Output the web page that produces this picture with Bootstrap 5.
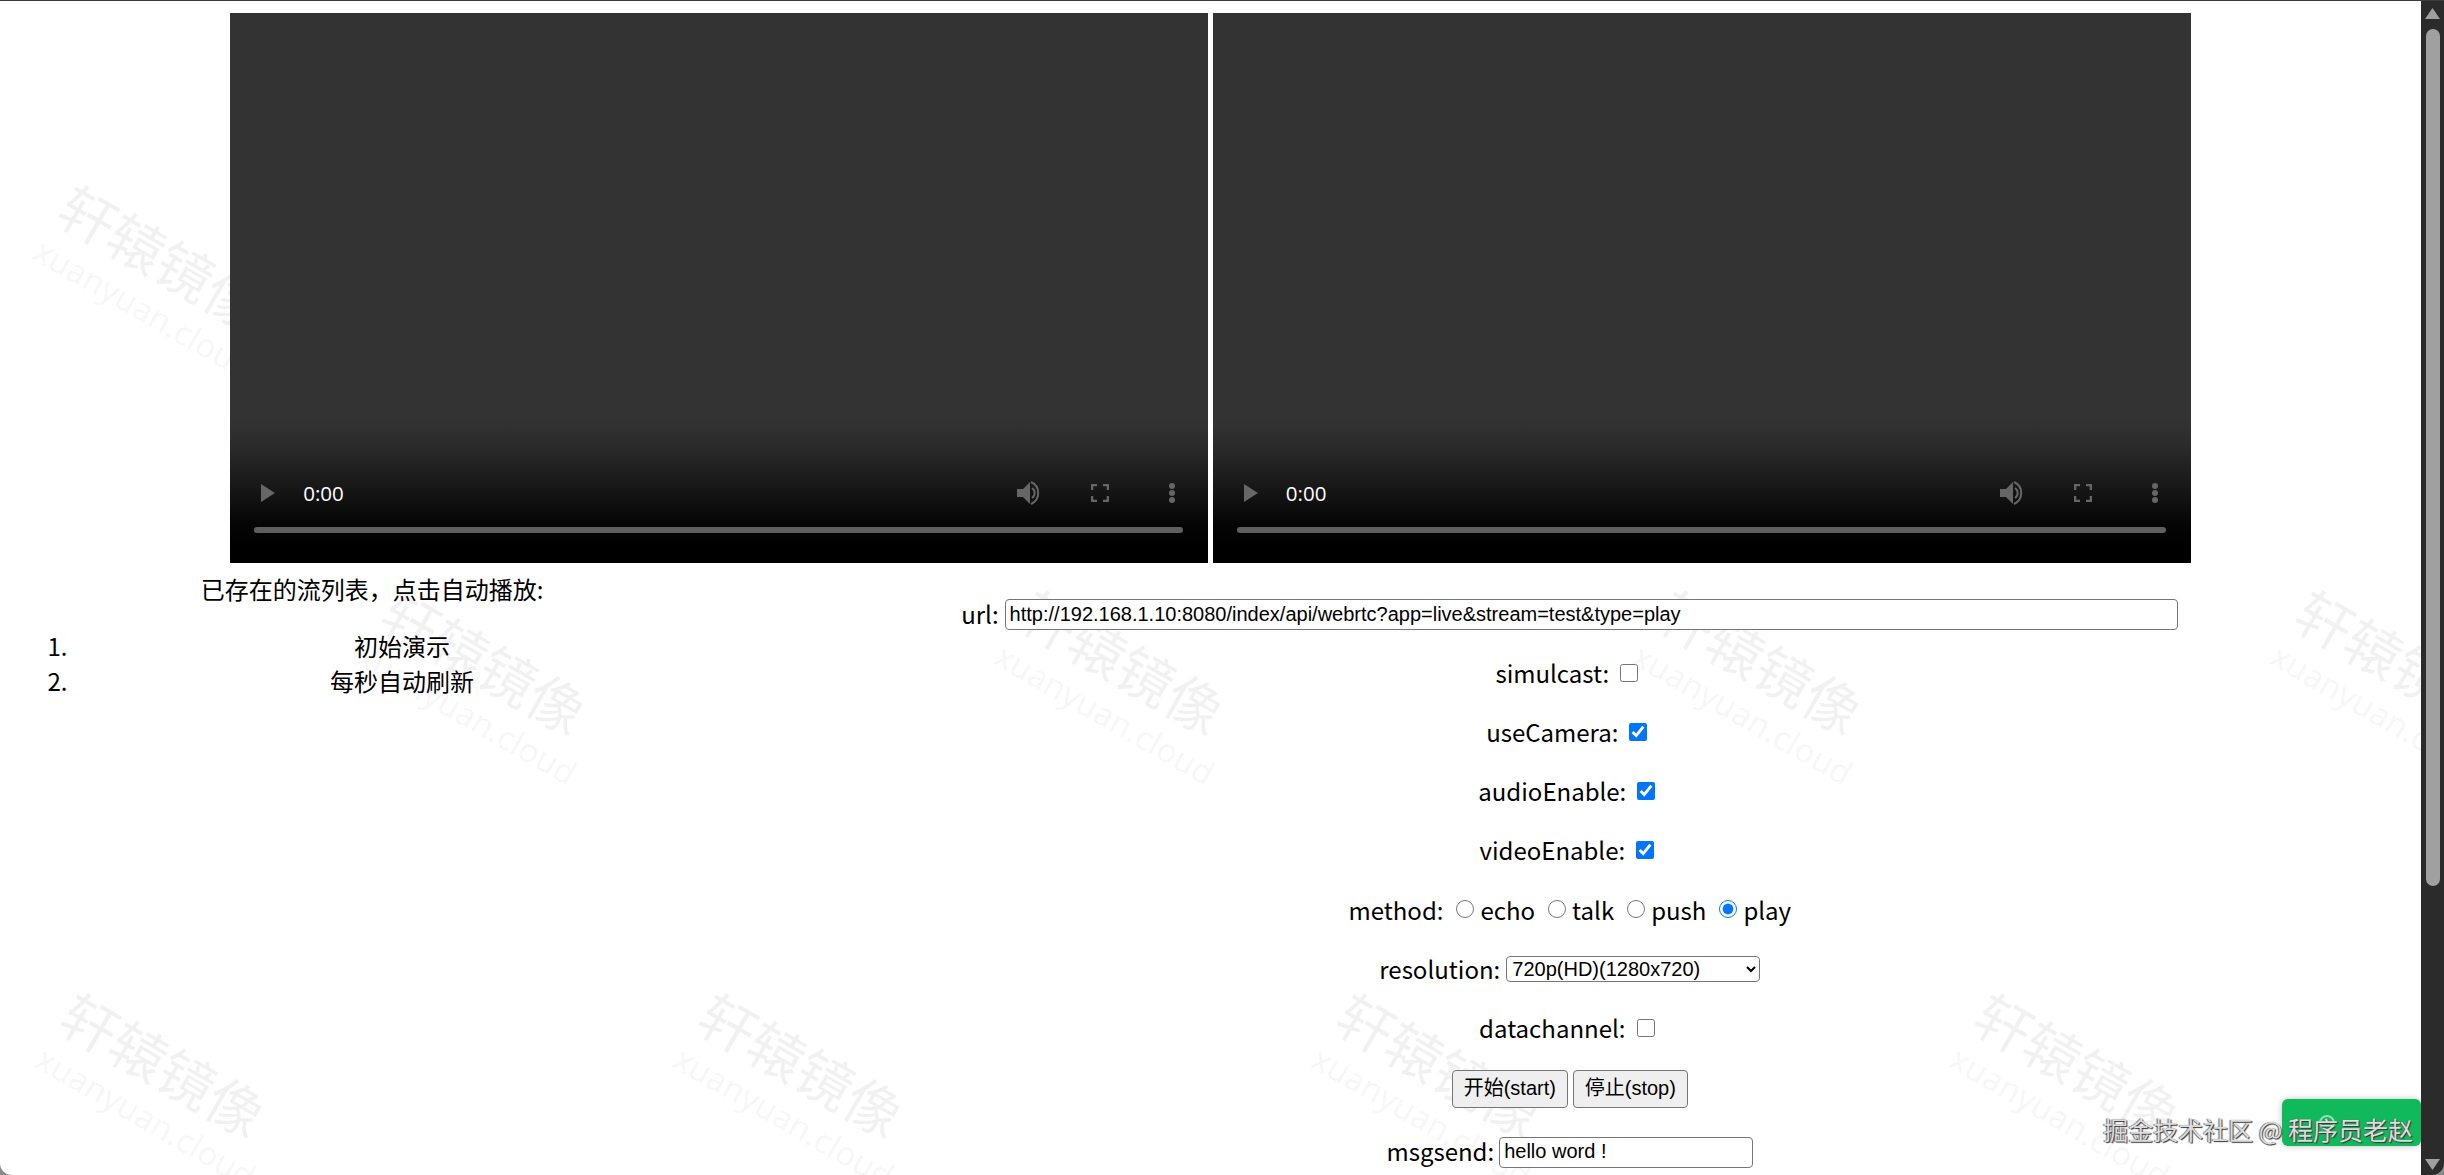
<!DOCTYPE html>
<html lang="zh">
<head>
<meta charset="utf-8">
<title>ZLMediaKit WebRTC</title>
<link href="https://cdn.jsdelivr.net/npm/bootstrap@5.3.0/dist/css/bootstrap.min.css" rel="stylesheet">
<style>
html,body{height:100%;background:#8a8a8a;}
.app-shell{height:100vh;overflow:hidden;font-family:"Noto Sans CJK SC","Noto Sans",sans-serif;font-size:24px;color:#000;}
.page-area{position:relative;flex:1 1 auto;min-width:0;background:#fff;border-top:1px solid #3c3c3c;border-bottom-left-radius:12px;overflow:hidden;padding:12px 12.8px 0;}
.video-row{position:relative;z-index:1;gap:4.6px;margin-bottom:8px;}
.vid-box{flex:0 0 978px;height:550px;background:linear-gradient(to bottom,#333 0,#333 74%,#2a2a2a 79%,#151515 87%,#050505 93%,#000 97%);padding:0 25px 30px 24px;display:flex;flex-direction:column;justify-content:flex-end;}
.vid-ctrl{height:24px;margin-bottom:22px;color:#fff;padding-left:7px;}
.vid-time{font-family:"Open Sans",Roboto,sans-serif;font-size:20.5px;line-height:24px;margin-left:28px;}
.vid-bar{height:6px;border-radius:3px;background:#5f5f5f;}
.ico-vol{margin-left:auto;}
.ico-full{margin-left:50px;}
.ico-more{margin-left:60px;margin-right:8px;}
.left-col{position:relative;z-index:1;flex:0 0 30%;width:30%;}
.right-col{position:relative;z-index:1;flex:0 0 70%;width:70%;padding-top:25.6px;}
.list-title{line-height:36px;}
.stream-list{padding-left:60px;margin:22px 0 0;}
.stream-list li{line-height:34.5px;}
.form-line{min-height:33.6px;margin-bottom:25.6px;line-height:33.6px;white-space:nowrap;}
.form-line label{display:block;margin:0;}
.native-txt{font-family:"Liberation Sans","Noto Sans CJK SC",sans-serif;font-size:20px;color:#000;border:1.5px solid #767676;border-radius:4px;background:#fff;padding:0 4px;height:31px;outline:0;}
.url-input{width:70%;margin-left:6px;margin-top:2px;}
.msg-input{width:254px;margin-left:5px;margin-top:3px;}
.native-select{font-family:"Liberation Sans",sans-serif;font-size:20px;width:254px;height:26px;border:1.5px solid #767676;border-radius:4px;background:#fff;padding:0 0 0 1px;margin-left:6px;margin-top:1px;color:#000;}
.tick{width:18px;height:18px;margin:0 6px 0 11px;accent-color:#0075ff;}
.tick-radio{margin:0 6px 0 13px;}
.native-btn{font-family:"Liberation Sans","Noto Sans CJK SC",sans-serif;font-size:20px;height:38px;border:1.5px solid #767676;border-radius:4px;background:#efefef;color:#000;padding:0;width:116px;}
.native-btn + .native-btn{margin-left:5px;width:115px;}
.watermarks{position:absolute;inset:0;pointer-events:none;color:rgba(0,0,0,.055);}
.wm-row{position:absolute;display:flex;width:3200px;}
.wm-row.r1{left:83px;top:167px;}
.wm-row.r2{left:406px;top:572px;}
.wm-row.r3{left:85px;top:975px;}
.wm-item{flex:0 0 638px;white-space:nowrap;}
.wm-inner{display:block;transform:rotate(30deg);transform-origin:0 0;}
.wm-cn{display:block;font-size:56px;line-height:72px;}
.wm-en{display:block;font-family:"Noto Sans",sans-serif;font-size:33px;line-height:40px;margin-left:0;}
.green-tag{position:absolute;right:0;bottom:29px;width:139px;height:47px;background:#10b95c;border-radius:6px;box-shadow:0 0 6px rgba(0,0,0,.25);color:rgba(255,255,255,.55);padding-left:36px;}
.credit{position:absolute;right:8px;bottom:27px;font-size:25px;line-height:38px;color:#dcdcdc;text-shadow:1px 1px 1px #333,-1px 0 1px #666;white-space:nowrap;}
.fake-scroll{flex:0 0 23px;background:#2b2b2b;border-bottom-right-radius:12px;padding:7px 4px 5px;border-top:1px solid #3c3c3c;}
.fake-thumb{width:14px;height:857px;margin:10px 0 0 1px;border-radius:7px;background:#a0a0a0;}
</style>
</head>
<body>
<div class="app-shell d-flex">
  <div class="page-area">
    <div class="video-row d-flex justify-content-center">
      <div class="vid-box">
        <div class="vid-ctrl d-flex align-items-center">
          <svg width="14" height="18" viewBox="0 0 14 18"><path fill="#666" d="M0 0 14 9 0 18z"/></svg>
          <span class="vid-time">0:00</span>
          <svg class="ico-vol" width="24" height="24" viewBox="0 0 24 24"><path fill="#666" d="M0 8h6l7-7v22l-7-7H0z"/><path fill="none" stroke="#666" stroke-width="2" d="M15 7a6 6 0 0 1 0 10M14 1a12 12 0 0 1 0 22"/></svg>
          <svg class="ico-full" width="18" height="18" viewBox="0 0 18 18"><path fill="none" stroke="#666" stroke-width="2.6" d="M1 6V1h5M12 1h5v5M1 12v5h5M12 17h5v-5"/></svg>
          <svg class="ico-more" width="6" height="20" viewBox="0 0 6 20"><circle fill="#666" cx="3" cy="3" r="3"/><circle fill="#666" cx="3" cy="10" r="3"/><circle fill="#666" cx="3" cy="17" r="3"/></svg>
        </div>
        <div class="vid-bar"></div>
      </div>
      <div class="vid-box">
        <div class="vid-ctrl d-flex align-items-center">
          <svg width="14" height="18" viewBox="0 0 14 18"><path fill="#666" d="M0 0 14 9 0 18z"/></svg>
          <span class="vid-time">0:00</span>
          <svg class="ico-vol" width="24" height="24" viewBox="0 0 24 24"><path fill="#666" d="M0 8h6l7-7v22l-7-7H0z"/><path fill="none" stroke="#666" stroke-width="2" d="M15 7a6 6 0 0 1 0 10M14 1a12 12 0 0 1 0 22"/></svg>
          <svg class="ico-full" width="18" height="18" viewBox="0 0 18 18"><path fill="none" stroke="#666" stroke-width="2.6" d="M1 6V1h5M12 1h5v5M1 12v5h5M12 17h5v-5"/></svg>
          <svg class="ico-more" width="6" height="20" viewBox="0 0 6 20"><circle fill="#666" cx="3" cy="3" r="3"/><circle fill="#666" cx="3" cy="10" r="3"/><circle fill="#666" cx="3" cy="17" r="3"/></svg>
        </div>
        <div class="vid-bar"></div>
      </div>
    </div>
    <div class="d-flex">
      <div class="left-col text-center">
        <div class="list-title">已存在的流列表，点击自动播放:</div>
        <ol class="stream-list">
          <li>初始演示</li>
          <li>每秒自动刷新</li>
        </ol>
      </div>
      <div class="right-col">
        <div class="form-line d-flex justify-content-center align-items-center"><label for="url">url:</label><input id="url" class="native-txt url-input" type="text" value="http://192.168.1.10:8080/index/api/webrtc?app=live&amp;stream=test&amp;type=play"></div>
        <div class="form-line d-flex justify-content-center align-items-center"><label for="sim">simulcast:</label><input id="sim" class="tick" type="checkbox"></div>
        <div class="form-line d-flex justify-content-center align-items-center"><label for="cam">useCamera:</label><input id="cam" class="tick" type="checkbox" checked></div>
        <div class="form-line d-flex justify-content-center align-items-center"><label for="aud">audioEnable:</label><input id="aud" class="tick" type="checkbox" checked></div>
        <div class="form-line d-flex justify-content-center align-items-center"><label for="vid">videoEnable:</label><input id="vid" class="tick" type="checkbox" checked></div>
        <div class="form-line d-flex justify-content-center align-items-center"><label>method:</label><input id="m1" class="tick tick-radio" type="radio" name="method"><label for="m1">echo</label><input id="m2" class="tick tick-radio" type="radio" name="method"><label for="m2">talk</label><input id="m3" class="tick tick-radio" type="radio" name="method"><label for="m3">push</label><input id="m4" class="tick tick-radio" type="radio" name="method" checked><label for="m4">play</label></div>
        <div class="form-line d-flex justify-content-center align-items-center"><label for="res">resolution:</label><select id="res" class="native-select"><option>720p(HD)(1280x720)</option></select></div>
        <div class="form-line d-flex justify-content-center align-items-center"><label for="dc">datachannel:</label><input id="dc" class="tick" type="checkbox"></div>
        <div class="form-line d-flex justify-content-center align-items-center"><button class="native-btn" type="button">开始(start)</button><button class="native-btn" type="button">停止(stop)</button></div>
        <div class="form-line d-flex justify-content-center align-items-center"><label for="msg">msgsend:</label><input id="msg" class="native-txt msg-input" type="text" value="hello word !"></div>
      </div>
    </div>
    <div class="watermarks">
      <div class="wm-row r1"><div class="wm-item"><span class="wm-inner"><span class="wm-cn">轩辕镜像</span><span class="wm-en">xuanyuan.cloud</span></span></div></div>
      <div class="wm-row r2"><div class="wm-item"><span class="wm-inner"><span class="wm-cn">轩辕镜像</span><span class="wm-en">xuanyuan.cloud</span></span></div><div class="wm-item"><span class="wm-inner"><span class="wm-cn">轩辕镜像</span><span class="wm-en">xuanyuan.cloud</span></span></div><div class="wm-item"><span class="wm-inner"><span class="wm-cn">轩辕镜像</span><span class="wm-en">xuanyuan.cloud</span></span></div><div class="wm-item"><span class="wm-inner"><span class="wm-cn">轩辕镜像</span><span class="wm-en">xuanyuan.cloud</span></span></div></div>
      <div class="wm-row r3"><div class="wm-item"><span class="wm-inner"><span class="wm-cn">轩辕镜像</span><span class="wm-en">xuanyuan.cloud</span></span></div><div class="wm-item"><span class="wm-inner"><span class="wm-cn">轩辕镜像</span><span class="wm-en">xuanyuan.cloud</span></span></div><div class="wm-item"><span class="wm-inner"><span class="wm-cn">轩辕镜像</span><span class="wm-en">xuanyuan.cloud</span></span></div><div class="wm-item"><span class="wm-inner"><span class="wm-cn">轩辕镜像</span><span class="wm-en">xuanyuan.cloud</span></span></div></div>
    </div>
    <div class="green-tag d-flex align-items-center"><svg width="18" height="18" viewBox="0 0 18 18"><circle cx="9" cy="9" r="7" fill="none" stroke="currentColor" stroke-width="2"/></svg></div>
    <div class="credit">掘金技术社区 @ 程序员老赵</div>
  </div>
  <div class="fake-scroll d-flex flex-column">
    <svg class="flex-shrink-0" width="15" height="11" viewBox="0 0 15 11"><path fill="#a0a0a0" d="M7.5 0 15 11H0z"/></svg>
    <div class="fake-thumb flex-shrink-0"></div>
    <svg class="mt-auto flex-shrink-0" width="15" height="11" viewBox="0 0 15 11"><path fill="#a0a0a0" d="M0 0h15L7.5 11z"/></svg>
  </div>
</div>
<script src="https://cdn.jsdelivr.net/npm/bootstrap@5.3.0/dist/js/bootstrap.bundle.min.js"></script>
</body>
</html>
